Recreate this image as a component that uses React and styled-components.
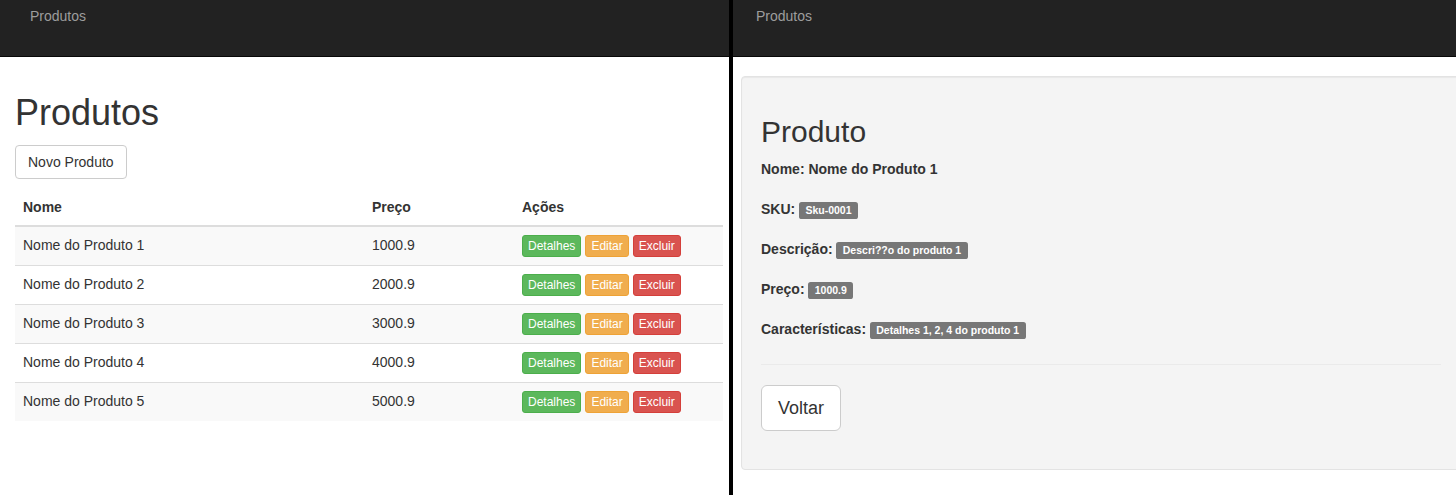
import React from "react";
import styled, { createGlobalStyle } from "styled-components";

const Global = createGlobalStyle`
  html, body { margin: 0; padding: 0; background: #fff; }
  body {
    font-family: "Liberation Sans", Arial, Helvetica, sans-serif;
    font-size: 14px;
    line-height: 20px;
    color: #333;
  }
  * { box-sizing: border-box; }
`;

const Split = styled.div`
  display: flex;
  width: 1456px;
  height: 495px;
  overflow: hidden;
`;

const Panel = styled.div`
  flex: ${(p) => (p.$grow ? "1 1 auto" : `0 0 ${p.$width}px`)};
  min-width: 0;
  overflow: hidden;
  background: #fff;
`;

const Divider = styled.div`
  flex: 0 0 4px;
  background: #000;
`;

const Navbar = styled.nav`
  height: 57px;
  background: #222;
  border-bottom: 1px solid #080808;
  padding: 6px 0 0 ${(p) => p.$indent}px;
  margin-bottom: 19px;
`;

const Brand = styled.a`
  color: #9d9d9d;
  font-size: 14px;
  line-height: 20px;
  text-decoration: none;
`;

const Container = styled.div`
  display: flow-root;
  padding: 0 15px;
`;

const Title = styled.h1`
  font-size: 36px;
  font-weight: 500;
  line-height: 1.1;
  margin: 17px 0 12px;
  color: #333;
`;

const Button = styled.button`
  display: inline-block;
  font-family: inherit;
  font-size: ${(p) => (p.$large ? "18px" : "14px")};
  line-height: ${(p) => (p.$large ? "24px" : "20px")};
  padding: ${(p) => (p.$large ? "10px 16px" : "6px 12px")};
  border-radius: ${(p) => (p.$large ? "6px" : "4px")};
  background: #fff;
  color: #333;
  border: 1px solid #ccc;
  cursor: pointer;
  margin-bottom: ${(p) => p.$mb || 0}px;
`;

const Table = styled.table`
  width: 708px;
  border-collapse: collapse;
  border-spacing: 0;
  margin-top: 10px;
`;

const Th = styled.th`
  text-align: left;
  font-weight: bold;
  padding: 8px;
  line-height: 20px;
  border-bottom: 2px solid #ddd;
  width: ${(p) => p.$w}px;
`;

const Tr = styled.tr`
  background: ${(p) => (p.$striped ? "#f9f9f9" : "#fff")};
`;

const Td = styled.td`
  padding: 8px;
  line-height: 20px;
  vertical-align: top;
  border-top: ${(p) => (p.$first ? "none" : "1px solid #ddd")};
`;

const Actions = styled.div`
  display: flex;
  gap: 4px;
  height: 22px;
`;

const variants = {
  success: { bg: "#5cb85c", border: "#4cae4c" },
  warning: { bg: "#f0ad4e", border: "#eea236" },
  danger: { bg: "#d9534f", border: "#d43f3a" },
};

const XsButton = styled.a`
  display: inline-block;
  font-size: 12px;
  line-height: 18px;
  padding: 1px 5px;
  border-radius: 3px;
  color: #fff;
  background: ${(p) => variants[p.$v].bg};
  border: 1px solid ${(p) => variants[p.$v].border};
  text-decoration: none;
  cursor: pointer;
`;

const Well = styled.div`
  width: 720px;
  margin-left: 8px;
  padding: 19px;
  background: #f4f4f4;
  border: 1px solid #e3e3e3;
  border-radius: 4px;
  box-shadow: inset 0 1px 1px rgba(0, 0, 0, 0.05);
`;

const SubTitle = styled.h2`
  font-size: 30px;
  font-weight: 500;
  line-height: 1.1;
  margin: 19px 0 11px;
  color: #333;
`;

const Fields = styled.div`
  display: flex;
  flex-direction: column;
  gap: 20px;
`;

const Field = styled.div`
  font-weight: bold;
  line-height: 20px;
`;

const Label = styled.span`
  display: inline;
  padding: 0.2em 0.6em 0.3em;
  font-size: 75%;
  font-weight: bold;
  line-height: 1;
  color: #fff;
  background: #777;
  border-radius: 0.25em;
  white-space: nowrap;
  vertical-align: baseline;
`;

const Rule = styled.hr`
  border: 0;
  border-top: 1px solid #eaeaea;
  margin: 25px 0 20px;
`;

const products = [1, 2, 3, 4, 5].map((n) => ({
  name: `Nome do Produto ${n}`,
  price: `${n}000.9`,
}));

export default function App() {
  return (
    <>
      <Global />
      <Split>
        <Panel $width={729}>
          <Navbar $indent={30}>
            <Brand>Produtos</Brand>
          </Navbar>
          <Container>
            <Title>Produtos</Title>
            <Button>Novo Produto</Button>
            <Table>
              <thead>
                <tr>
                  <Th $w={349}>Nome</Th>
                  <Th $w={150}>Preço</Th>
                  <Th $w={209}>Ações</Th>
                </tr>
              </thead>
              <tbody>
                {products.map((p, i) => (
                  <Tr key={p.name} $striped={i % 2 === 0}>
                    <Td $first={i === 0}>{p.name}</Td>
                    <Td $first={i === 0}>{p.price}</Td>
                    <Td $first={i === 0}>
                      <Actions>
                        <XsButton $v="success">Detalhes</XsButton>
                        <XsButton $v="warning">Editar</XsButton>
                        <XsButton $v="danger">Excluir</XsButton>
                      </Actions>
                    </Td>
                  </Tr>
                ))}
              </tbody>
            </Table>
          </Container>
        </Panel>
        <Divider />
        <Panel $grow>
          <Navbar $indent={23}>
            <Brand>Produtos</Brand>
          </Navbar>
          <Well>
            <SubTitle>Produto</SubTitle>
            <Fields>
              <Field>Nome: Nome do Produto 1</Field>
              <Field>
                SKU: <Label>Sku-0001</Label>
              </Field>
              <Field>
                Descrição: <Label>Descri??o do produto 1</Label>
              </Field>
              <Field>
                Preço: <Label>1000.9</Label>
              </Field>
              <Field>
                Características: <Label>Detalhes 1, 2, 4 do produto 1</Label>
              </Field>
            </Fields>
            <Rule />
            <Button $large $mb={19}>
              Voltar
            </Button>
          </Well>
        </Panel>
      </Split>
    </>
  );
}
